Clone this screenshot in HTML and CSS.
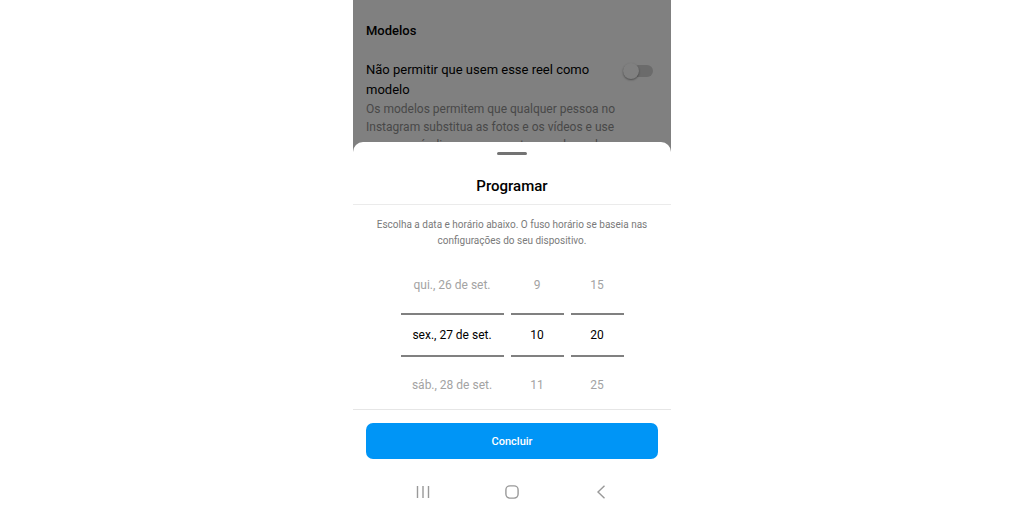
FILE: index.html
```html
<!DOCTYPE html>
<html lang="pt-BR">
<head>
  <meta charset="UTF-8">
  <meta name="viewport" content="width=device-width, initial-scale=1">
  <title>Programar</title>
  <link rel="stylesheet" href="styles.css">
</head>
<body>
  <div class="phone">
    <!-- Tela de trás, escurecida -->
    <section class="settings">
      <h2>Modelos</h2>
      <div class="setting">
        <div class="setting-text">
          <label for="no-template">Não permitir que usem esse reel como modelo</label>
          <p id="template-help">Os modelos permitem que qualquer pessoa no Instagram substitua as fotos e os vídeos e use o mesmo áudio e os segmentos usados nele</p>
        </div>
        <input type="checkbox" id="no-template" class="switch" aria-describedby="template-help">
      </div>
    </section>

    <!-- Painel de programação -->
    <form class="sheet">
      <div class="handle"></div>
      <h1>Programar</h1>
      <p class="hint">Escolha a data e horário abaixo. O fuso horário se baseia nas configurações do seu dispositivo.</p>

      <div class="picker">
        <div class="wheel wheel-date" role="radiogroup" aria-label="Data">
          <label><input type="radio" name="date" value="26"><span>qui., 26 de set.</span></label>
          <label><input type="radio" name="date" value="27" checked><span>sex., 27 de set.</span></label>
          <label><input type="radio" name="date" value="28"><span>sáb., 28 de set.</span></label>
        </div>
        <div class="wheel" role="radiogroup" aria-label="Hora">
          <label><input type="radio" name="hour" value="9"><span>9</span></label>
          <label><input type="radio" name="hour" value="10" checked><span>10</span></label>
          <label><input type="radio" name="hour" value="11"><span>11</span></label>
        </div>
        <div class="wheel" role="radiogroup" aria-label="Minuto">
          <label><input type="radio" name="minute" value="15"><span>15</span></label>
          <label><input type="radio" name="minute" value="20" checked><span>20</span></label>
          <label><input type="radio" name="minute" value="25"><span>25</span></label>
        </div>
      </div>

      <div class="actions">
        <button type="submit" class="done-btn">Concluir</button>
      </div>
    </form>

    <!-- Barra de navegação -->
    <nav class="navbar">
      <button type="button" aria-label="Recentes">
        <svg width="16" height="16" viewBox="0 0 16 16"><path d="M2.5 2v12M8 2v12M13.5 2v12"/></svg>
      </button>
      <button type="button" aria-label="Início">
        <svg width="16" height="16" viewBox="0 0 16 16"><rect x="1.9" y="1.9" width="12.2" height="12.2" rx="4"/></svg>
      </button>
      <button type="button" aria-label="Voltar">
        <svg width="16" height="16" viewBox="0 0 16 16"><path d="M11.5 1.8L5 8l6.5 6.2"/></svg>
      </button>
    </nav>
  </div>
</body>
</html>
```

FILE: styles.css
```css
* {
  box-sizing: border-box;
}

body {
  margin: 0;
  background: #fff;
  color: #000;
  font-family: Roboto, "Liberation Sans", sans-serif;
}

h1, h2, p {
  margin: 0;
}

button, input {
  font: inherit;
}

.phone {
  display: flex;
  flex-direction: column;
  width: 100%;
  max-width: 318px;
  min-height: 100vh;
  margin: 0 auto;
}

/* tela de trás */
.settings {
  flex: 1 1 0;
  overflow: hidden;
  padding: 21px 18px 0 13px;
  background: #808080;
}

h2 {
  margin-bottom: 19px;
  font-size: 13px;
  font-weight: 500;
  line-height: 20px;
}

.setting {
  display: flex;
  justify-content: space-between;
  gap: 6px;
}

.setting-text {
  flex: 1;
}

.setting label {
  display: block;
  font-size: 13px;
  line-height: 20px;
}

.setting p {
  color: #484848;
  font-size: 12px;
  line-height: 18px;
}

.switch {
  appearance: none;
  flex: none;
  display: flex;
  align-items: center;
  width: 30px;
  height: 12px;
  margin: 5px 0;
  border-radius: 6px;
  background: #6b6b6b;
}

.switch::before {
  content: "";
  width: 16px;
  height: 16px;
  border-radius: 50%;
  background: #808080;
  box-shadow: 0 1px 2px rgba(0, 0, 0, 0.4);
}

.switch:checked {
  justify-content: flex-end;
}

/* painel */
.sheet {
  position: relative;
  margin-top: -10px;
  padding-top: 10px;
  border-radius: 10px 10px 0 0;
  background: #fff;
  text-align: center;
}

.handle {
  width: 30px;
  height: 3px;
  margin: 0 auto;
  border-radius: 2px;
  background: #737373;
}

h1 {
  padding: 21px 16px 8px;
  border-bottom: 1px solid #ebebeb;
  font-size: 15px;
  font-weight: 500;
  line-height: 20px;
}

.hint {
  padding: 12px 16px 8px;
  color: #7a7a7a;
  font-size: 10px;
  line-height: 16px;
}

.picker {
  display: flex;
  justify-content: center;
  gap: 7px;
  font-size: 12px;
  line-height: 20px;
}

.wheel {
  width: 53px;
}

.wheel-date {
  width: 103px;
}

.wheel label {
  display: block;
  padding: 18px 0;
  color: #a3a3a3;
}

.wheel label:last-child {
  padding-bottom: 14px;
}

.wheel label:has(:checked) {
  padding: 10px 0;
  border-top: 2px solid #808080;
  border-bottom: 2px solid #808080;
  color: #000;
}

.wheel input {
  position: absolute;
  opacity: 0;
  pointer-events: none;
}

.actions {
  padding: 13px;
  border-top: 1px solid #e6e6e6;
}

.done-btn {
  display: block;
  width: 100%;
  height: 36px;
  border: none;
  border-radius: 7px;
  background: #0095f6;
  color: #fff;
  font-size: 11px;
  font-weight: 500;
  cursor: pointer;
}

/* navegação */
.navbar {
  display: flex;
  justify-content: space-around;
  padding: 8px 26px;
}

.navbar button {
  display: flex;
  padding: 4px;
  border: none;
  background: none;
  cursor: pointer;
}

.navbar svg {
  fill: none;
  stroke: #999;
  stroke-width: 1.4;
}
```
